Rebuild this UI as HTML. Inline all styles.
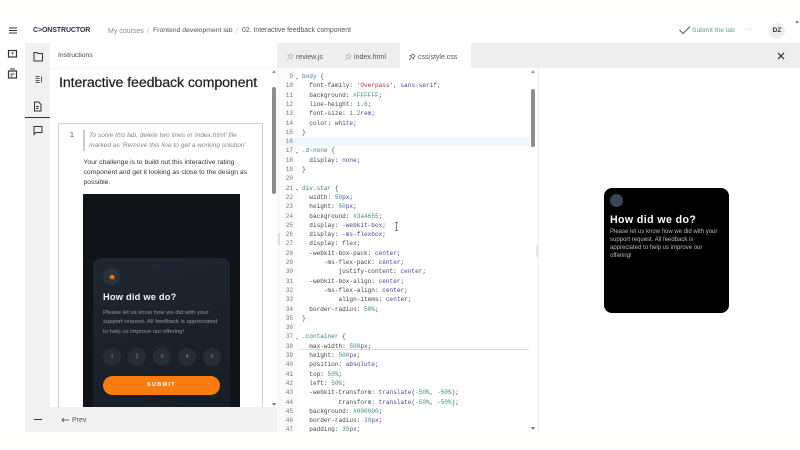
<!DOCTYPE html>
<html><head><meta charset="utf-8">
<style>
html,body{margin:0;padding:0;width:800px;height:450px;overflow:hidden;background:#fdfefb;font-family:"Liberation Sans",sans-serif;color:#333}
.a{position:absolute}
.t{position:absolute;white-space:nowrap;line-height:1}
.c{position:absolute;left:302px;font:6.08px/9px "Liberation Mono",monospace;white-space:pre;color:#444}
.n{position:absolute;width:20px;left:273px;text-align:right;font:6.08px/9px "Liberation Mono",monospace;color:#777}
.b{color:#3a7f8c}.v{color:#4a3f94}.s{color:#a33}.g{color:#3f8f80}
.r{position:absolute;top:154px;width:18px;height:18px;border-radius:50%;background:#262d37;color:#7d8590;font-size:5.5px;line-height:18px;text-align:center}
</style></head><body>
<div class="a" style="left:0;top:18px;width:800px;height:414px;background:#fff"></div>

<!-- left rail -->
<svg class="a" style="left:0;top:18px" width="50" height="70" fill="none" stroke="#333" stroke-width="1.2">
<path d="M9 10h8M9 12.500h8M9 15h8" stroke-width="1"/>
<rect x="8.500" y="32.500" width="8" height="6.500"/><path d="M11 34.500l1.500 2 1.500-2z" fill="#333" stroke="none"/>
<rect x="8.500" y="53" width="8" height="7"/><path d="M10 51h5M10.500 56h4M10.500 58h2" stroke-width=".9"/>
</svg>

<!-- header -->
<div class="t" style="left:33px;top:27px;font-size:7px;font-weight:bold;color:#2b3242;letter-spacing:-.1px">C&gt;ONSTRUCTOR</div>
<div class="t" style="left:108px;top:27.500px;font-size:7px;color:#888">My courses</div>
<div class="t" style="left:147px;top:27.500px;font-size:7px;color:#bbb">/</div>
<div class="t" style="left:153px;top:27.500px;font-size:6.85px;color:#555">Frontend development lab</div>
<div class="t" style="left:236px;top:27.500px;font-size:7px;color:#bbb">/</div>
<div class="t" style="left:242px;top:27.500px;font-size:6.88px;color:#555">02. Interactive feedback component</div>
<svg class="a" style="left:678px;top:25px" width="14" height="11" fill="none" stroke="#3f6a5c" stroke-width="1"><path d="M1.500 5l3.500 3.500 7-7"/></svg>
<div class="t" style="left:692px;top:27.500px;font-size:6.7px;color:#6a9a88">Submit the lab</div>
<div class="t" style="left:745px;top:26px;font-size:7px;color:#777;letter-spacing:.5px">···</div>
<div class="a" style="left:769px;top:23px;width:16px;height:16px;border-radius:50%;background:#eee;font:bold 6.500px/16px 'Liberation Sans',sans-serif;text-align:center;color:#333">DZ</div>

<!-- icon column -->
<div class="a" style="left:25px;top:43px;width:25px;height:389px;background:#f1f1f1"></div>
<div class="a" style="left:25px;top:117px;width:25px;height:1px;background:#333"></div>
<svg class="a" style="left:25px;top:43px" width="25" height="110" fill="none" stroke="#333" stroke-width="1">
<path d="M9 9.500h3l1 1h4.500v7.500h-8.500z"/>
<path d="M10.500 33.500h4M10.500 35.500h4M10.500 37.500h4M10.500 39.500h4M16.500 33.500v6" stroke-width="1" stroke="#555"/>
<path d="M9.500 59h4l2.500 2.500v6.500h-6.500zM11 63.500h3M11 65.500h2.500"/>
<path d="M9 83.500h8v6h-6l-2 2z"/>
</svg>

<!-- instruction panel -->
<div class="t" style="left:58px;top:53px;font-size:6.8px;color:#444">Instructions</div>
<div class="a" style="left:50px;top:68px;width:227px;height:1px;background:#f4f4f4"></div>
<div class="t" style="left:59px;top:75.500px;font-size:14.2px;color:#1c1c1c;letter-spacing:-.1px;-webkit-text-stroke:.2px #1c1c1c">Interactive feedback component</div>

<div class="a" style="left:58px;top:123px;width:205px;height:284px;border:1px solid #c5d3e3;border-bottom:none;box-sizing:border-box"></div>
<div class="t" style="left:70px;top:132px;font-size:7px;color:#444">1</div>
<div class="a" style="left:83px;top:130px;width:1.500px;height:21px;background:#ccc"></div>
<div class="t" style="left:89px;top:133px;font-size:6.6px;font-style:italic;color:#888">To solve this lab, delete two lines in 'index.html' file</div>
<div class="t" style="left:89px;top:143px;font-size:6.6px;font-style:italic;color:#888">marked as 'Remove this line to get a working solution'</div>
<div class="t" style="left:83.500px;top:159.500px;font-size:6.8px;color:#333">Your challenge is to build out this interactive rating</div>
<div class="t" style="left:83.500px;top:169.500px;font-size:6.8px;color:#333">component and get it looking as close to the design as</div>
<div class="t" style="left:83.500px;top:179.500px;font-size:6.8px;color:#333">possible.</div>

<!-- design image -->
<div class="a" style="left:83px;top:194px;width:157px;height:213px;background:#101317;overflow:hidden">
  <div class="a" style="left:10px;top:64px;width:137px;height:160px;border-radius:8px;background:linear-gradient(160deg,#1f2732,#171d25)"></div>
  <div class="a" style="left:20px;top:74px;width:17px;height:17px;border-radius:50%;background:#2a323d"></div>
  <svg class="a" style="left:24.500px;top:78.500px" width="8" height="8"><path d="M4 .5l1 2.300 2.500.2-1.900 1.700.6 2.500L4 5.400 1.800 6.700l.6-2.500L.5 3l2.500-.2z" fill="#f97c12"/></svg>
  <div class="t" style="left:20px;top:99px;font-size:9.3px;font-weight:bold;color:#f3f3f3;letter-spacing:.2px">How did we do?</div>
  <div class="t" style="left:20px;top:117px;font-size:5.9px;color:#8e96a1">Please let us know how we did with your</div>
  <div class="t" style="left:20px;top:126px;font-size:5.9px;color:#8e96a1">support request. All feedback is appreciated</div>
  <div class="t" style="left:20px;top:135.500px;font-size:5.9px;color:#8e96a1">to help us improve our offering!</div>
  <div class="r" style="left:20px">1</div>
  <div class="r" style="left:45px">2</div>
  <div class="r" style="left:70px">3</div>
  <div class="r" style="left:95px">4</div>
  <div class="r" style="left:120px">5</div>
  <div class="a" style="left:20px;top:182px;width:117px;height:19px;border-radius:10px;background:#fb7c0e;color:#fff;font-size:5.500px;font-weight:bold;letter-spacing:1.300px;line-height:19px;text-align:center">SUBMIT</div>
</div>

<!-- left scrollbar -->
<div class="a" style="left:272px;top:87px;width:4px;height:107px;background:#8c8c8c;border-radius:2px"></div>
<div class="a" style="left:272px;top:70px;width:0;height:0;border:2.500px solid transparent;border-bottom:3.500px solid #999;border-top:0"></div>
<div class="a" style="left:272px;top:403px;width:0;height:0;border:2.500px solid transparent;border-top:3.500px solid #777;border-bottom:0"></div>

<!-- bottom bar -->
<div class="a" style="left:25px;top:407px;width:252px;height:25px;background:#f1f1f1"></div>
<div class="a" style="left:34px;top:419px;width:8px;height:1px;background:#333"></div>
<svg class="a" style="left:61px;top:416px" width="9" height="8" fill="none" stroke="#444" stroke-width=".8"><path d="M1 4h7M3 2L1 4l2 2"/></svg>
<div class="t" style="left:72px;top:417px;font-size:7px;color:#555">Prev</div>

<!-- tabs -->
<div class="a" style="left:277px;top:43px;width:523px;height:25px;background:#eeeeee"></div>
<div class="a" style="left:400px;top:43px;width:71px;height:25px;background:#fff"></div>
<svg class="a" style="left:286px;top:53px" width="8" height="8" fill="none" stroke="#aaa" stroke-width=".7"><path d="M1 7l2-2M3 2.500l2 -1.500 2 2-1.500 2 0 1L2 2.500z"/></svg>
<div class="t" style="left:296px;top:53.500px;font-size:7px;color:#555">review.js</div>
<svg class="a" style="left:344px;top:53px" width="8" height="8" fill="none" stroke="#aaa" stroke-width=".7"><path d="M1 7l2-2M3 2.500l2 -1.500 2 2-1.500 2 0 1L2 2.500z"/></svg>
<div class="t" style="left:354px;top:53.500px;font-size:7px;color:#555">index.html</div>
<svg class="a" style="left:408px;top:53px" width="8" height="8" fill="none" stroke="#555" stroke-width=".7"><path d="M1 7l2-2M3 2.500l2 -1.500 2 2-1.500 2 0 1L2 2.500z"/></svg>
<div class="t" style="left:418px;top:53.500px;font-size:7px;color:#555">css/style.css</div>
<svg class="a" style="left:777px;top:52px" width="8" height="8" fill="none" stroke="#222" stroke-width="1.100"><path d="M1 1l6 6M7 1L1 7"/></svg>

<!-- editor -->
<div class="a" style="left:277px;top:68px;width:3px;height:364px;background:#f8f8f8"></div>
<div class="a" style="left:280px;top:68px;width:19px;height:364px;background:#fbfbfb"></div>
<div class="a" style="left:280px;top:136.500px;width:250px;height:9.300px;background:#f0f8fd"></div>
<div class="a" style="left:299px;top:348.500px;width:230px;height:1px;background:#ddd"></div>

<div class="n" style="top:72px">9</div><div class="c" style="top:72px"><span class="b">body</span> {</div>
<div class="n" style="top:81.300px">10</div><div class="c" style="top:81.300px">  font-family: <span class="s">'Overpass'</span>, <span class="v">sans-serif</span>;</div>
<div class="n" style="top:90.600px">11</div><div class="c" style="top:90.600px">  background: <span class="g">#FFFFFF</span>;</div>
<div class="n" style="top:99.900px">12</div><div class="c" style="top:99.900px">  line-height: <span class="g">1.6</span>;</div>
<div class="n" style="top:109.200px">13</div><div class="c" style="top:109.200px">  font-size: <span class="g">1.2</span><span class="v">rem</span>;</div>
<div class="n" style="top:118.500px">14</div><div class="c" style="top:118.500px">  color: <span class="v">white</span>;</div>
<div class="n" style="top:127.800px">15</div><div class="c" style="top:127.800px">}</div>
<div class="n" style="top:137.100px">16</div>
<div class="n" style="top:146.400px">17</div><div class="c" style="top:146.400px"><span class="b">.d-none</span> {</div>
<div class="n" style="top:155.700px">18</div><div class="c" style="top:155.700px">  display: <span class="v">none</span>;</div>
<div class="n" style="top:165px">19</div><div class="c" style="top:165px">}</div>
<div class="n" style="top:174.300px">20</div>
<div class="n" style="top:183.600px">21</div><div class="c" style="top:183.600px"><span class="b">div.star</span> {</div>
<div class="n" style="top:192.900px">22</div><div class="c" style="top:192.900px">  width: <span class="g">50</span><span class="v">px</span>;</div>
<div class="n" style="top:202.200px">23</div><div class="c" style="top:202.200px">  height: <span class="g">50</span><span class="v">px</span>;</div>
<div class="n" style="top:211.500px">24</div><div class="c" style="top:211.500px">  background: <span class="g">#3a4655</span>;</div>
<div class="n" style="top:220.800px">25</div><div class="c" style="top:220.800px">  display: <span class="v">-webkit-box</span>;</div>
<div class="n" style="top:230.100px">26</div><div class="c" style="top:230.100px">  display: <span class="v">-ms-flexbox</span>;</div>
<div class="n" style="top:239.400px">27</div><div class="c" style="top:239.400px">  display: <span class="v">flex</span>;</div>
<div class="n" style="top:248.700px">28</div><div class="c" style="top:248.700px">  -webkit-box-pack: <span class="v">center</span>;</div>
<div class="n" style="top:258px">29</div><div class="c" style="top:258px">      -ms-flex-pack: <span class="v">center</span>;</div>
<div class="n" style="top:267.300px">30</div><div class="c" style="top:267.300px">          justify-content: <span class="v">center</span>;</div>
<div class="n" style="top:276.600px">31</div><div class="c" style="top:276.600px">  -webkit-box-align: <span class="v">center</span>;</div>
<div class="n" style="top:285.900px">32</div><div class="c" style="top:285.900px">      -ms-flex-align: <span class="v">center</span>;</div>
<div class="n" style="top:295.200px">33</div><div class="c" style="top:295.200px">          align-items: <span class="v">center</span>;</div>
<div class="n" style="top:304.500px">34</div><div class="c" style="top:304.500px">  border-radius: <span class="g">50%</span>;</div>
<div class="n" style="top:313.800px">35</div><div class="c" style="top:313.800px">}</div>
<div class="n" style="top:323.100px">36</div>
<div class="n" style="top:332.400px">37</div><div class="c" style="top:332.400px"><span class="b">.container</span> {</div>
<div class="n" style="top:341.700px">38</div><div class="c" style="top:341.700px">  max-width: <span class="g">500</span><span class="v">px</span>;</div>
<div class="n" style="top:351px">39</div><div class="c" style="top:351px">  height: <span class="g">500</span><span class="v">px</span>;</div>
<div class="n" style="top:360.300px">40</div><div class="c" style="top:360.300px">  position: <span class="v">absolute</span>;</div>
<div class="n" style="top:369.600px">41</div><div class="c" style="top:369.600px">  top: <span class="g">50%</span>;</div>
<div class="n" style="top:378.900px">42</div><div class="c" style="top:378.900px">  left: <span class="g">50%</span>;</div>
<div class="n" style="top:388.200px">43</div><div class="c" style="top:388.200px">  -webkit-transform: <span class="v">translate</span>(<span class="g">-50%</span>, <span class="g">-50%</span>);</div>
<div class="n" style="top:397.500px">44</div><div class="c" style="top:397.500px">          transform: <span class="v">translate</span>(<span class="g">-50%</span>, <span class="g">-50%</span>);</div>
<div class="n" style="top:406.800px">45</div><div class="c" style="top:406.800px">  background: <span class="g">#000000</span>;</div>
<div class="n" style="top:416.100px">46</div><div class="c" style="top:416.100px">  border-radius: <span class="g">30</span><span class="v">px</span>;</div>
<div class="n" style="top:425.400px;height:6.600px;overflow:hidden">47</div><div class="c" style="top:425.400px;height:6.600px;overflow:hidden">  padding: <span class="g">35</span><span class="v">px</span>;</div>

<!-- fold arrows -->
<div class="a" style="left:295.500px;top:77.500px;width:0;height:0;border:1.500px solid transparent;border-top:2px solid #999;border-bottom:0"></div>
<div class="a" style="left:295.500px;top:152px;width:0;height:0;border:1.500px solid transparent;border-top:2px solid #999;border-bottom:0"></div>
<div class="a" style="left:295.500px;top:189px;width:0;height:0;border:1.500px solid transparent;border-top:2px solid #999;border-bottom:0"></div>
<div class="a" style="left:295.500px;top:338px;width:0;height:0;border:1.500px solid transparent;border-top:2px solid #999;border-bottom:0"></div>

<!-- text cursor -->
<svg class="a" style="left:394px;top:222px" width="5" height="9" fill="none" stroke="#555" stroke-width=".7"><path d="M1 .5h3M2.500 .5v8M1 8.500h3"/></svg>

<!-- editor scrollbar -->
<div class="a" style="left:531px;top:89px;width:4px;height:58px;background:#8c8c8c;border-radius:2px"></div>
<div class="a" style="left:530.500px;top:70px;width:0;height:0;border:2.500px solid transparent;border-bottom:3.500px solid #999;border-top:0"></div>
<div class="a" style="left:530.500px;top:427px;width:0;height:0;border:2.500px solid transparent;border-top:3.500px solid #777;border-bottom:0"></div>
<div class="a" style="left:538px;top:68px;width:1px;height:364px;background:#eee"></div>
<div class="a" style="left:278px;top:233px;width:2px;height:12px;background:#ddd"></div>
<div class="a" style="left:536px;top:245px;width:2px;height:12px;background:#e6e6e6"></div>

<!-- preview card -->
<div class="a" style="left:604px;top:188px;width:125px;height:125px;background:#000;border-radius:8px"></div>
<div class="a" style="left:610px;top:194px;width:13px;height:13px;border-radius:50%;background:#3a4655"></div>
<div class="t" style="left:610px;top:215px;font-size:10.6px;font-weight:bold;color:#fff;letter-spacing:.4px">How did we do?</div>
<div class="t" style="left:610px;top:229px;font-size:6px;color:#bbb">Please let us know how we did with your</div>
<div class="t" style="left:610px;top:237px;font-size:6px;color:#bbb">support request. All feedback is</div>
<div class="t" style="left:610px;top:245px;font-size:6px;color:#bbb">appreciated to help us improve our</div>
<div class="t" style="left:610px;top:253px;font-size:6px;color:#bbb">offering!</div>

<div class="a" style="left:795px;top:20px;width:0;height:0;border:2px solid transparent;border-bottom:3px solid #888;border-top:0"></div>
</body></html>
